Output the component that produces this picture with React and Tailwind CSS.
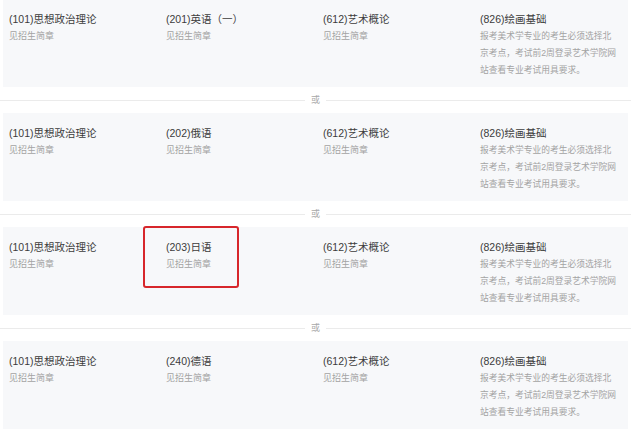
import React from "react";

const desc = "报考美术学专业的考生必须选择北京考点，考试前2周登录艺术学院网站查看专业考试用具要求。";

const options = [
  { lang: "(201)英语（一）" },
  { lang: "(202)俄语" },
  { lang: "(203)日语", highlight: true },
  { lang: "(240)德语" },
];

function Cell({ title, children }) {
  return (
    <div className="pt-[12px]">
      <div className="text-[10.5px] leading-[17px] text-[#3c3c3c]">{title}</div>
      <div className="text-[9px] leading-[17px] text-[#a3a3a3]">{children}</div>
    </div>
  );
}

function Divider() {
  return (
    <div className="flex h-[26px] items-center">
      <div className="h-px flex-1 bg-[#ebebeb]" />
      <span className="px-[6px] text-[9px] leading-none text-[#a8a8a8]">或</span>
      <div className="h-px flex-1 bg-[#ebebeb]" />
    </div>
  );
}

function Card({ lang, highlight }) {
  return (
    <div className="relative mx-[3px] grid h-[88px] grid-cols-[157px_157px_157px_1fr] bg-[#f7f8fa] pl-[6px]">
      <Cell title="(101)思想政治理论">见招生简章</Cell>
      <Cell title={lang}>见招生简章</Cell>
      <Cell title="(612)艺术概论">见招生简章</Cell>
      <Cell title="(826)绘画基础">
        <span className="block w-[138px] text-[8.75px]">{desc}</span>
      </Cell>
      {/* red highlight annotation */}
      {highlight && (
        <div className="absolute left-[140px] top-[-1px] h-[62px] w-[96px] rounded-[3px] border-2 border-[#d7262b]" />
      )}
    </div>
  );
}

export default function App() {
  return (
    <div
      className="h-[435px] w-[640px] overflow-hidden bg-white"
      style={{ fontFamily: '"Liberation Sans", "Noto Sans CJK SC", sans-serif' }}
    >
      <div className="-mt-px w-[631px]">
        {options.map((o, i) => (
          <React.Fragment key={o.lang}>
            {i > 0 && <Divider />}
            <Card lang={o.lang} highlight={o.highlight} />
          </React.Fragment>
        ))}
      </div>
    </div>
  );
}
